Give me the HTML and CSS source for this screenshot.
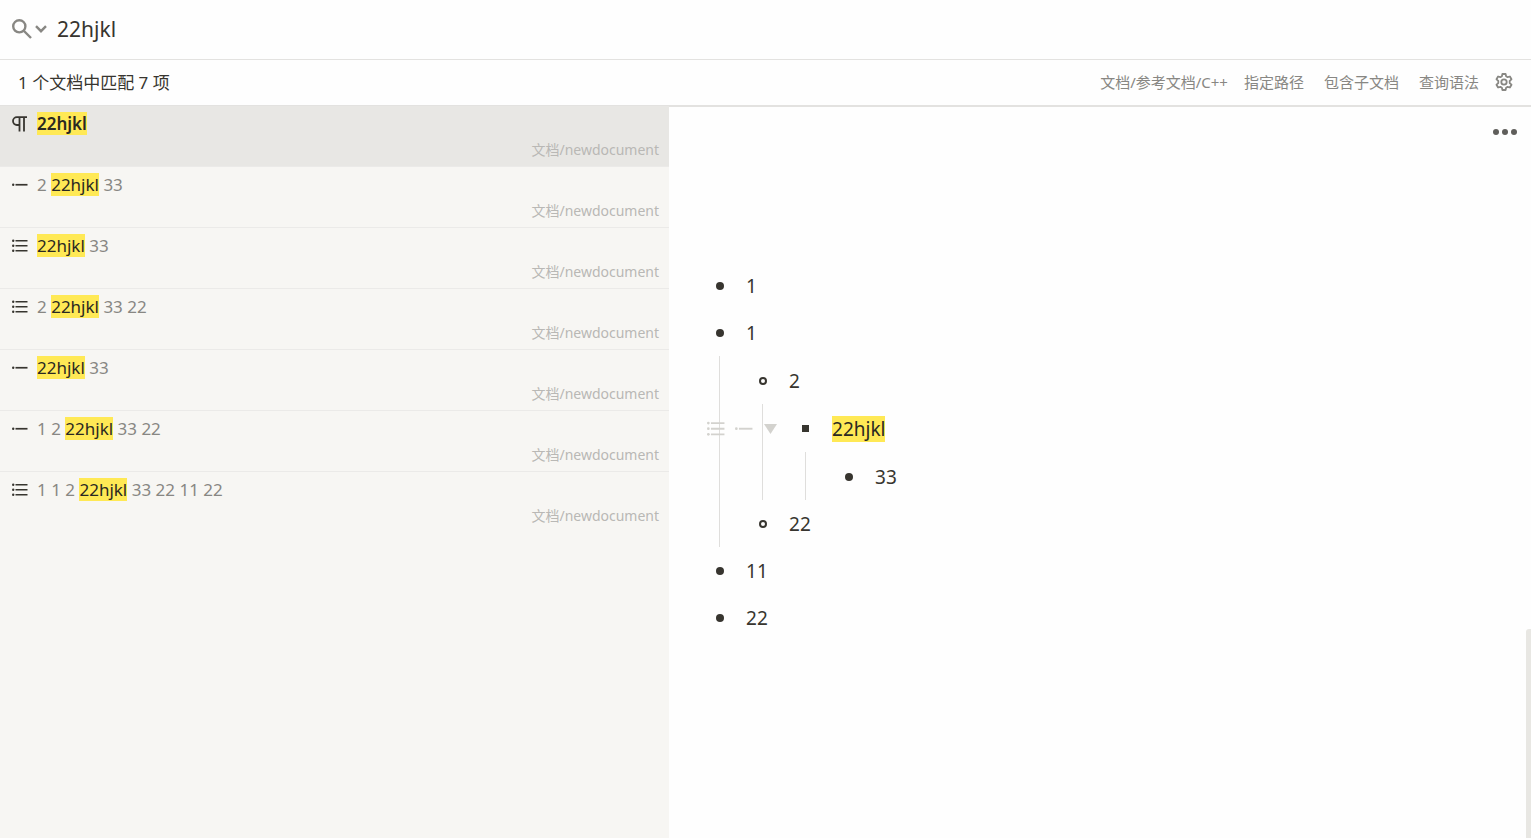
FILE: index.html
```
<!DOCTYPE html>
<html lang="zh-CN">
<head>
    <meta charset="UTF-8">
    <meta name="viewport" content="width=device-width, initial-scale=1.0">
    <title>搜索</title>
    <link rel="stylesheet" href="styles.css">
</head>
<body>
    <svg class="sprite" aria-hidden="true">
        <symbol id="iconParagraph" viewBox="0 0 16 16">
            <path d="M15 1.200H4.900a3.900 3.900 0 0 0 0 7.800H7.500M7.500 1.200V15.500M12 1.200V15.500" fill="none" stroke="currentColor" stroke-width="1.800"/>
        </symbol>
        <symbol id="iconItem" viewBox="0 0 16 16">
            <circle cx="1.2" cy="7.700" r="1.200"/>
            <path d="M3.500 6.900H15.500v1.700H3.500z"/>
        </symbol>
        <symbol id="iconList" viewBox="0 0 16 16">
            <circle cx="1.2" cy="2.700" r="1.200"/>
            <circle cx="1.2" cy="7.700" r="1.200"/>
            <circle cx="1.2" cy="12.700" r="1.200"/>
            <path d="M3.500 1.900H15.500v1.700H3.500zM3.500 6.900H15.500v1.700H3.500zM3.500 11.900H15.500v1.700H3.500z"/>
        </symbol>
    </svg>

    <header class="search">
        <button class="search-btn" aria-label="搜索历史">
            <svg class="glass" viewBox="0 0 20 20"><circle cx="7.3" cy="7.3" r="6.1"/><path d="M12 12l7 7"/></svg>
            <svg class="chevron" viewBox="0 0 12 8"><path d="M1 1.2l5 5 5-5"/></svg>
        </button>
        <input class="search-input" type="text" value="22hjkl" aria-label="搜索">
    </header>

    <div class="bar">
        <span class="count">1 个文档中匹配 7 项</span>
        <button class="path">文档/参考文档/C++</button>
        <button>指定路径</button>
        <button>包含子文档</button>
        <button>查询语法</button>
        <button class="gear" aria-label="设置">
            <svg viewBox="0 0 18 18">
                <path d="M7.4 1h3.2l.5 2.3 1.5.9 2.3-.7 1.6 2.8-1.8 1.6v2.2l1.8 1.6-1.6 2.8-2.3-.7-1.5.9-.5 2.3H7.4l-.5-2.3-1.5-.9-2.3.7-1.6-2.8 1.8-1.6V7.900L1.500 6.300l1.600-2.800 2.300.7 1.500-.9z"/>
                <circle cx="9" cy="9" r="2.700"/>
            </svg>
        </button>
    </div>

    <main class="main">
        <ul class="results">
            <li><button class="result focus">
                <span class="line"><svg><use href="#iconParagraph"/></svg><b><mark>22hjkl</mark></b></span>
                <span class="from">文档/newdocument</span>
            </button></li>
            <li><button class="result">
                <span class="line"><svg><use href="#iconItem"/></svg><span>2 <mark>22hjkl</mark> 33</span></span>
                <span class="from">文档/newdocument</span>
            </button></li>
            <li><button class="result">
                <span class="line"><svg><use href="#iconList"/></svg><span><mark>22hjkl</mark> 33</span></span>
                <span class="from">文档/newdocument</span>
            </button></li>
            <li><button class="result">
                <span class="line"><svg><use href="#iconList"/></svg><span>2 <mark>22hjkl</mark> 33 22</span></span>
                <span class="from">文档/newdocument</span>
            </button></li>
            <li><button class="result">
                <span class="line"><svg><use href="#iconItem"/></svg><span><mark>22hjkl</mark> 33</span></span>
                <span class="from">文档/newdocument</span>
            </button></li>
            <li><button class="result">
                <span class="line"><svg><use href="#iconItem"/></svg><span>1 2 <mark>22hjkl</mark> 33 22</span></span>
                <span class="from">文档/newdocument</span>
            </button></li>
            <li><button class="result">
                <span class="line"><svg><use href="#iconList"/></svg><span>1 1 2 <mark>22hjkl</mark> 33 22 11 22</span></span>
                <span class="from">文档/newdocument</span>
            </button></li>
        </ul>

        <section class="preview">
            <button class="more" aria-label="更多">
                <svg viewBox="0 0 24 6"><circle cx="3" cy="3" r="3"/><circle cx="12" cy="3" r="3"/><circle cx="21" cy="3" r="3"/></svg>
            </button>
            <ul class="doc">
                <li><div class="row"><i class="dot"></i><span>1</span></div></li>
                <li>
                    <div class="row"><i class="dot"></i><span>1</span></div>
                    <ul>
                        <li>
                            <div class="row"><i class="dot ring"></i><span>2</span></div>
                            <ul>
                                <li>
                                    <div class="row">
                                        <div class="gutter">
                                            <button aria-label="列表"><svg><use href="#iconList"/></svg></button>
                                            <button aria-label="列表项"><svg><use href="#iconItem"/></svg></button>
                                            <button aria-label="折叠"><svg class="fold" viewBox="0 0 14 10"><path d="M1 0h13L7.500 10z"/></svg></button>
                                        </div>
                                        <i class="dot square"></i><span><mark>22hjkl</mark></span>
                                    </div>
                                    <ul>
                                        <li><div class="row"><i class="dot"></i><span>33</span></div></li>
                                    </ul>
                                </li>
                            </ul>
                        </li>
                        <li><div class="row"><i class="dot ring"></i><span>22</span></div></li>
                    </ul>
                </li>
                <li><div class="row"><i class="dot"></i><span>11</span></div></li>
                <li><div class="row"><i class="dot"></i><span>22</span></div></li>
            </ul>
            <div class="thumb"></div>
        </section>
    </main>
</body>
</html>
```
FILE: styles.css
```
* {
    margin: 0;
    padding: 0;
    box-sizing: border-box;
}

body {
    display: flex;
    flex-direction: column;
    height: 100vh;
    overflow: hidden;
    color: #37352f;
    background: #fefefe;
    font-family: "Noto Sans", "Noto Sans CJK SC", sans-serif;
}

button {
    border: none;
    background: none;
    color: inherit;
    font: inherit;
    cursor: pointer;
}

ul {
    list-style: none;
}

svg {
    display: block;
    flex: none;
    fill: currentColor;
}

mark {
    color: #2a2822;
    background: #ffe955;
}

.sprite {
    position: absolute;
    width: 0;
    height: 0;
}

/* search box */
.search {
    display: flex;
    align-items: center;
    gap: 10px;
    height: 60px;
    padding: 0 12px 2px;
    border-bottom: 1px solid #e3e2e0;
}

.search-btn {
    display: flex;
    align-items: center;
    gap: 3px;
    color: #888783;
}

.search-btn svg {
    fill: none;
    stroke: currentColor;
    stroke-width: 2.4;
}

.glass {
    width: 20px;
    height: 20px;
}

.chevron {
    width: 12px;
    height: 8px;
}

.search-input {
    flex: 1;
    border: none;
    outline: none;
    color: inherit;
    background: none;
    font-family: inherit;
    font-size: 21px;
}

.bar {
    display: flex;
    align-items: center;
    gap: 20px;
    height: 46px;
    padding: 0 18px 2px;
    border-bottom: 1px solid #e3e2e0;
    color: #888783;
    font-size: 15px;
}

.count {
    flex: 1;
    color: #37352f;
    font-size: 17px;
}

.path {
    margin-right: -4px;
}

.gear {
    margin-left: -4px;
}

.gear svg {
    width: 18px;
    height: 18px;
    fill: none;
    stroke: currentColor;
    stroke-width: 1.8;
    stroke-linejoin: round;
}

.main {
    display: flex;
    flex: 1;
    min-height: 0;
}

/* matches */
.results {
    width: 43.7%;
    background: #f7f6f3;
}

.result {
    display: flex;
    flex-direction: column;
    gap: 5px;
    width: 100%;
    padding: 6px 10px 6px 12px;
    border-bottom: 1px solid #ebeae8;
    text-align: left;
}

.results li:last-child .result {
    border-bottom: none;
}

.focus {
    background: #e8e7e4;
}

.line {
    display: flex;
    align-items: center;
    gap: 9px;
    color: #888783;
    font-size: 17px;
    line-height: 23px;
}

.line svg {
    width: 16px;
    height: 16px;
    color: #37352f;
}

.line b {
    font-weight: 600;
}

.from {
    align-self: flex-end;
    color: #b9b8b5;
    font-size: 14px;
    line-height: 20px;
}

/* document preview */
.preview {
    position: relative;
    flex: 1;
    border-top: 1px solid #e3e2e0;
}

.more {
    position: absolute;
    top: 22px;
    right: 14px;
    color: #5f5e5b;
}

.more svg {
    width: 24px;
    height: 6px;
}

.doc {
    padding: 155px 34px 0;
    font-size: 19px;
}

.doc ul {
    margin-left: 16px;
    padding: 1px 0 0 26px;
    border-left: 1px solid #dfdedc;
}

.row {
    position: relative;
    display: flex;
    align-items: center;
    gap: 22px;
    height: 47px;
    padding-left: 13px;
}

.dot {
    width: 8px;
    height: 8px;
    border-radius: 50%;
    background: #37352f;
}

.ring {
    border: 2px solid #37352f;
    background: none;
}

.square {
    width: 7px;
    height: 7px;
    margin-right: 1px;
    border-radius: 0;
}

.gutter {
    position: absolute;
    right: 100%;
    display: flex;
    align-items: center;
    gap: 10px;
    margin-right: 12px;
    color: #d3d2ce;
}

.gutter svg {
    width: 18px;
    height: 18px;
}

.gutter .fold {
    width: 14px;
    height: 10px;
}

.thumb {
    position: absolute;
    right: 0;
    bottom: 0;
    width: 5px;
    height: 28.6%;
    border-radius: 3px 0 0 0;
    background: #e8e7e3;
}
```
